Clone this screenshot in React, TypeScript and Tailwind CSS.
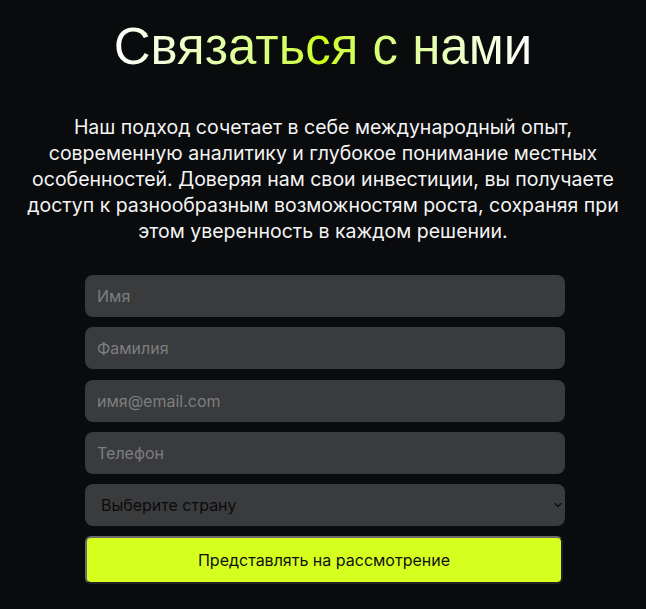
import { ChevronDown } from 'lucide-react'

const fields = [
  { name: 'firstName', type: 'text', placeholder: 'Имя' },
  { name: 'lastName', type: 'text', placeholder: 'Фамилия' },
  { name: 'email', type: 'email', placeholder: 'имя@email.com' },
  { name: 'phone', type: 'tel', placeholder: 'Телефон' },
]

function App() {
  return (
    <div className="min-h-screen bg-[#0a0b0d] text-white flex flex-col items-center pt-[18px] px-5">
      <h1 className="font-['Liberation_Sans',Arial,sans-serif] text-[51px] leading-[58px] bg-gradient-to-r from-[#ffffff] via-[#ccff00] to-[#ffffff] bg-clip-text text-transparent">
        Связаться с нами
      </h1>

      <p className="mt-[38px] max-w-[592px] text-center font-['Inter',sans-serif] text-[19.5px] leading-[26px] text-[#f4f4f4]">
        Наш подход сочетает в себе международный опыт, современную аналитику и глубокое понимание местных
        особенностей. Доверяя нам свои инвестиции, вы получаете доступ к разнообразным возможностям роста,
        сохраняя при этом уверенность в каждом решении.
      </p>

      <form className="mt-[31px] ml-[4px] w-[480px] flex flex-col gap-[10.3px] font-['Inter',sans-serif] text-base">
        {fields.map((f) => (
          <input
            key={f.name}
            name={f.name}
            type={f.type}
            placeholder={f.placeholder}
            className="h-[42px] w-full rounded-lg bg-[#3a3b3d] px-3 text-white placeholder:text-[#7d7e80] outline-none"
          />
        ))}

        <div className="relative">
          <select
            defaultValue=""
            className="h-[42px] w-full appearance-none rounded-lg bg-[#3a3b3d] pl-4 pr-8 text-[#0b0b0b] outline-none"
          >
            <option value="" disabled>
              Выберите страну
            </option>
          </select>
          <ChevronDown
            size={12}
            strokeWidth={3}
            className="pointer-events-none absolute right-[1px] top-1/2 -translate-y-1/2 text-[#111]"
          />
        </div>

        <button
          type="submit"
          className="h-[48px] w-[478px] rounded-md border-2 border-t-[#6b6b6b] border-l-[#6b6b6b] border-r-[#222] border-b-[#222] bg-[#d4ff1f] text-[#111]"
        >
          Представлять на рассмотрение
        </button>
      </form>
    </div>
  )
}

export default App
